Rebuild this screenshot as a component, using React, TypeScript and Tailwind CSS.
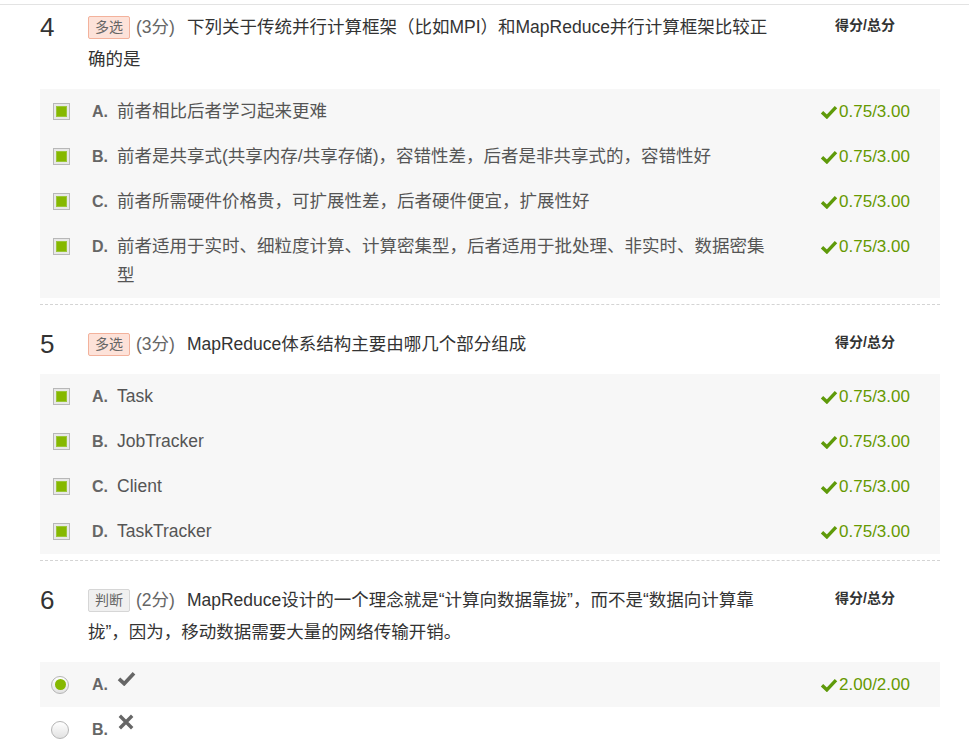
import React from "react";

type Opt = { key: string; text?: string; icon?: "yes" | "no"; score?: string; selected: boolean };
type Question = {
  no: number;
  kind: "多选" | "判断";
  points: string;
  title: string;
  radio?: boolean;
  options: Opt[];
};

const questions: Question[] = [
  {
    no: 4,
    kind: "多选",
    points: "(3分)",
    title: "下列关于传统并行计算框架（比如MPI）和MapReduce并行计算框架比较正确的是",
    options: [
      { key: "A.", text: "前者相比后者学习起来更难", score: "0.75/3.00", selected: true },
      { key: "B.", text: "前者是共享式(共享内存/共享存储)，容错性差，后者是非共享式的，容错性好", score: "0.75/3.00", selected: true },
      { key: "C.", text: "前者所需硬件价格贵，可扩展性差，后者硬件便宜，扩展性好", score: "0.75/3.00", selected: true },
      { key: "D.", text: "前者适用于实时、细粒度计算、计算密集型，后者适用于批处理、非实时、数据密集型", score: "0.75/3.00", selected: true },
    ],
  },
  {
    no: 5,
    kind: "多选",
    points: "(3分)",
    title: "MapReduce体系结构主要由哪几个部分组成",
    options: [
      { key: "A.", text: "Task", score: "0.75/3.00", selected: true },
      { key: "B.", text: "JobTracker", score: "0.75/3.00", selected: true },
      { key: "C.", text: "Client", score: "0.75/3.00", selected: true },
      { key: "D.", text: "TaskTracker", score: "0.75/3.00", selected: true },
    ],
  },
  {
    no: 6,
    kind: "判断",
    points: "(2分)",
    title: "MapReduce设计的一个理念就是“计算向数据靠拢”，而不是“数据向计算靠拢”，因为，移动数据需要大量的网络传输开销。",
    radio: true,
    options: [
      { key: "A.", icon: "yes", score: "2.00/2.00", selected: true },
      { key: "B.", icon: "no", selected: false },
    ],
  },
];

const CheckMark = ({ className }: { className?: string }) => (
  <svg viewBox="0 0 16 13" className={className}>
    <path d="M1.5 6.8 L6 11 L14.5 2" fill="none" stroke="currentColor" strokeWidth="3.2" strokeLinejoin="miter" />
  </svg>
);

const Cross = ({ className }: { className?: string }) => (
  <svg viewBox="0 0 16 16" className={className}>
    <path d="M2.5 2.5 L13.5 13.5 M13.5 2.5 L2.5 13.5" fill="none" stroke="currentColor" strokeWidth="3" />
  </svg>
);

const Checkbox = () => (
  <span className="block w-[17px] h-[17px] border border-[#b8b8b8] bg-[#e8e8e8] p-[2px]">
    <span className="block w-full h-full bg-[#86b800] border border-[#9cc63a]" />
  </span>
);

const Radio = ({ on }: { on: boolean }) => (
  <span className="flex w-[18px] h-[18px] rounded-full border border-[#b5b5b5] bg-[linear-gradient(#ffffff,#e2e2e2)] items-center justify-center">
    {on && <span className="block w-[11px] h-[11px] rounded-full bg-[#85b800]" />}
  </span>
);

const Badge = ({ kind }: { kind: string }) => (
  <span
    className={
      kind === "多选"
        ? "inline-block align-[1px] px-[6px] mr-[6px] text-[14px] leading-[21px] text-[#666] bg-[#fde2d9] border border-[#f3b29c] rounded-[2px]"
        : "inline-block align-[1px] px-[6px] mr-[6px] text-[14px] leading-[21px] text-[#666] bg-[#f0f0f0] border border-[#d6d6d6] rounded-[2px]"
    }
  >
    {kind}
  </span>
);

const QuestionBlock = ({ q, first }: { q: Question; first?: boolean }) => (
  <div className={`${first ? "pt-[6px]" : "pt-[23px]"} pb-[6px] border-b border-dashed border-[#d4d4d4]`}>
    <div className="flex">
      <div className="w-[48px] text-[26px] leading-[32px] text-[#333]">{q.no}</div>
      <div className="flex-1 pr-[12px] text-[17.5px] leading-[32px] text-[#333]">
        <Badge kind={q.kind} />
        <span className="text-[#666] mr-[12px]">{q.points}</span>
        {q.title}
      </div>
      <div className="w-[150px] text-center text-[14px] font-bold leading-[28px] text-[#333]">得分/总分</div>
    </div>
    <div className="mt-[14px]">
      {q.options.map((o) => (
        <div key={o.key} className={`flex py-[8px] ${o.selected ? "bg-[#f7f7f7]" : ""}`}>
          <div className={`w-[52px] h-[29px] flex items-center ${q.radio ? "pl-[11px]" : "pl-[13px]"}`}>
            {q.radio ? <Radio on={o.selected} /> : <Checkbox />}
          </div>
          <div className="flex-1 flex pr-[16px] text-[17.5px] leading-[29px] text-[#555]">
            <span className="w-[25px] shrink-0 font-bold text-[16px] text-[#666]">{o.key}</span>
            {o.text && <span className="flex-1">{o.text}</span>}
            {o.icon === "yes" && <CheckMark className="w-[19px] h-[15px] text-[#666] mt-[1px]" />}
            {o.icon === "no" && <Cross className="w-[18px] h-[18px] text-[#666] -mt-[2px]" />}
          </div>
          <div className="w-[150px] flex justify-center items-start text-[17px] leading-[29px] text-[#669900]">
            {o.score && (
              <span className="flex items-center h-[29px]">
                <CheckMark className="w-[18px] h-[14px] text-[#5f9a0a] mr-[1px]" />
                {o.score}
              </span>
            )}
          </div>
        </div>
      ))}
    </div>
  </div>
);

export default function App() {
  return (
    <div className="w-[969px] h-[756px] overflow-hidden bg-white font-['Liberation_Sans','Noto_Sans_CJK_SC',sans-serif]">
      <div className="h-[4px]" />
      <div className="border-t border-[#e3e3e3]" />
      <div className="pl-[40px] pr-[29px]">
        {questions.map((q, i) => (
          <QuestionBlock key={q.no} q={q} first={i === 0} />
        ))}
      </div>
    </div>
  );
}
